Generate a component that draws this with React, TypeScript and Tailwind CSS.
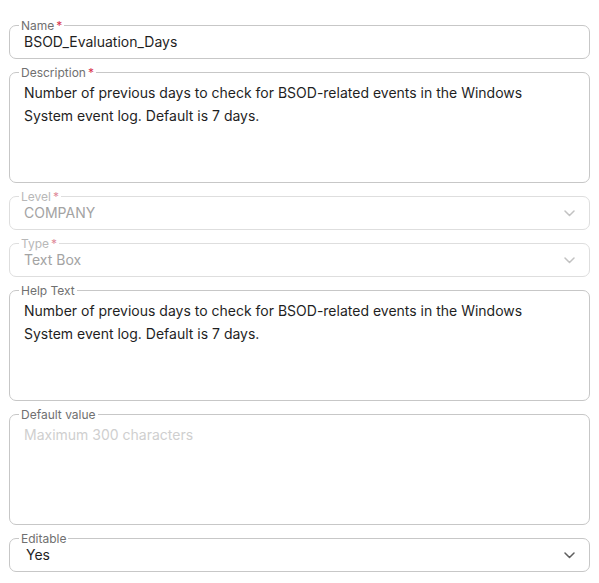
import type { ReactNode } from "react";

type FieldProps = {
    label: string;
    required?: boolean;
    disabled?: boolean;
    tall?: boolean;
    select?: boolean;
    children: ReactNode;
};

function Chevron({ disabled }: { disabled?: boolean }) {
    return (
        <svg width="11" height="7" viewBox="0 0 11 7" className={disabled ? "text-[#c2c2c2]" : "text-[#5f5f5f]"}>
            <polyline points="1,1 5.5,5.5 10,1" fill="none" stroke="currentColor" strokeWidth="1.5" strokeLinecap="round" strokeLinejoin="round" />
        </svg>
    );
}

function Field({ label, required, disabled, tall, select, children }: FieldProps) {
    return (
        <fieldset
            className={`border rounded-[7px] px-[14px] ${tall ? "h-[118px]" : "h-[41px]"} ${disabled ? "border-[#dedede]" : "border-[#c7c7c7]"}`}>
            <legend className={`-ml-[5px] px-[2px] pt-[2px] text-[12px] leading-[12px] ${disabled ? "text-[#b8b8b8]" : "text-[#707070]"}`}>
                {label}
                {required && <span className={`ml-[2px] ${disabled ? "text-[#e08a9a]" : "text-[#d9344f]"}`}>*</span>}
            </legend>
            <div className={`flex items-start justify-between ${tall ? "pt-[2px]" : "pt-0"}`}>
                <div className={`text-[14px] ${tall ? "leading-[23px]" : "leading-[20px]"} ${disabled ? "text-[#a3a3a3]" : "text-[#1f1f1f]"}`}>
                    {children}
                </div>
                {select && (
                    <div className="pt-[7px]">
                        <Chevron disabled={disabled} />
                    </div>
                )}
            </div>
        </fieldset>
    );
}

const helpCopy =
    "Number of previous days to check for BSOD-related events in the Windows System event log. Default is 7 days.";

export default function App() {
    return (
        <div className="w-[599px] h-[583px] bg-white px-[9px] pt-[18px] font-['Inter','Noto_Sans',sans-serif]">
            <div className="flex flex-col gap-[6px]">
                <Field label="Name" required>BSOD_Evaluation_Days</Field>
                <Field label="Description" required tall>
                    <p className="pr-[40px]">{helpCopy}</p>
                </Field>
                <Field label="Level" required disabled select>COMPANY</Field>
                <Field label="Type" required disabled select>Text Box</Field>
                <Field label="Help Text" tall>
                    <p className="pr-[40px]">{helpCopy}</p>
                </Field>
                <Field label="Default value" tall>
                    <span className="text-[#cfcfcf]">Maximum 300 characters</span>
                </Field>
                <Field label="Editable" select>
                    <span className="pl-[2px]">Yes</span>
                </Field>
            </div>
        </div>
    );
}
